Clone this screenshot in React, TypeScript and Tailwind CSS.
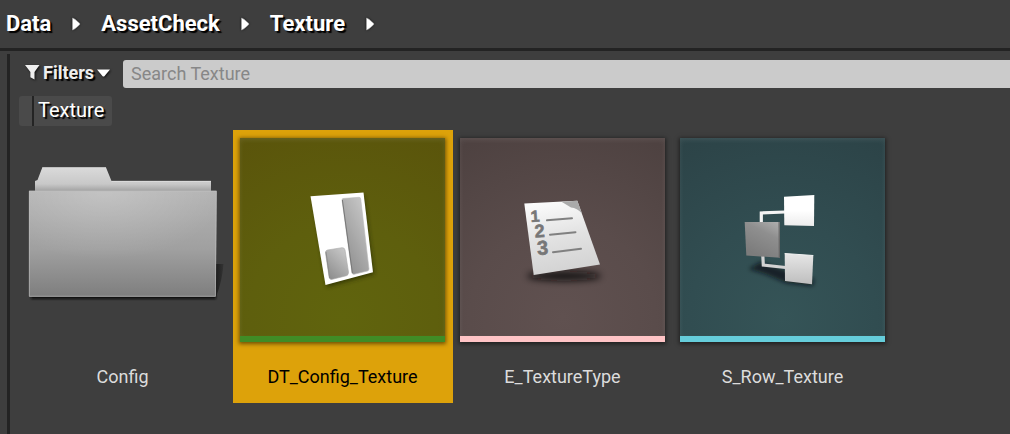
import type { ReactNode } from "react";

const crumbs = ["Data", "AssetCheck", "Texture"];

function CrumbArrow() {
  return (
    <svg viewBox="0 0 14 18" className="h-[18px] w-[14px] drop-shadow-[0_0_1px_#111]" aria-hidden="true">
      <path d="M3.500 3 V15 Q5.500 14.600 10.600 9.700 Q11.200 9 10.600 8.300 Q5.500 3.400 3.500 3Z" fill="#fff" stroke="#aaa" strokeWidth=".6" />
    </svg>
  );
}

function FolderArt() {
  return (
    <svg viewBox="0 0 205 204" className="h-[204px] w-[205px]" aria-hidden="true">
      <defs>
        <linearGradient id="folder-front" x1="0" y1="0" x2="0" y2="1">
          <stop offset="0" stopColor="#b3b3b3" />
          <stop offset=".55" stopColor="#a0a0a0" />
          <stop offset="1" stopColor="#7e7e7e" />
        </linearGradient>
        <radialGradient id="folder-shine" cx=".4" cy="0" r=".65">
          <stop offset="0" stopColor="#fff" stopOpacity=".22" />
          <stop offset="1" stopColor="#fff" stopOpacity="0" />
        </radialGradient>
        <linearGradient id="folder-back" x1="0" y1="0" x2="0" y2="1">
          <stop offset="0" stopColor="#dadada" />
          <stop offset=".7" stopColor="#c8c8c8" />
          <stop offset="1" stopColor="#a2a2a2" />
        </linearGradient>
        <linearGradient id="folder-side" x1="0" y1="0" x2="1" y2="0">
          <stop offset="0" stopColor="#1c1c1c" />
          <stop offset="1" stopColor="#333" />
        </linearGradient>
        <filter id="folder-blur" x="-10%" y="-100%" width="120%" height="300%">
          <feGaussianBlur stdDeviation="1" />
        </filter>
      </defs>
      <path d="M195 126 H203.500 Q202 144 196 159Z" fill="url(#folder-side)" />
      <rect x="11" y="157" width="185" height="4" fill="#111" filter="url(#folder-blur)" />
      <path d="M15 53 V43 L17.500 42 L22.300 29.500 H86 L91.500 43 H191 V53Z" fill="url(#folder-back)" />
      <path d="M22.300 29.700 H86 M91.500 43.300 H191" stroke="#e6e6e6" strokeWidth=".7" />
      <path d="M9 52.700 H196.700 L195.700 158.700 H9Z" fill="url(#folder-front)" />
      <path d="M9.300 53.200 H196.300 L195.400 158.300 H9.300Z" fill="url(#folder-shine)" stroke="#c2c2c2" strokeWidth=".8" strokeOpacity=".75" />
    </svg>
  );
}

function TableArt() {
  return (
    <svg viewBox="0 0 205 198" className="block w-full" aria-hidden="true">
      <defs>
        <linearGradient id="table-bar" x1="1" y1="0" x2=".3" y2="1">
          <stop offset="0" stopColor="#cfcfcf" />
          <stop offset="1" stopColor="#8f8f8f" />
        </linearGradient>
        <filter id="table-blur" x="-30%" y="-30%" width="160%" height="160%">
          <feGaussianBlur stdDeviation="2" />
        </filter>
      </defs>
      <path d="M74 64 L124 58 L134 136 L87 149Z" fill="#222500" opacity=".7" filter="url(#table-blur)" />
      <path d="M70.500 58.300 L123.500 54.500 L133 134.300 L85.500 147Z" fill="#fff" />
      <path d="M103 60.500 L119 59.300 Q120.500 59.200 120.700 61 L129 131 Q129 132.500 127.500 133 L114 136.300 Q112.300 136.500 112 135 L102 62 Q102 60.700 103 60.500Z" fill="url(#table-bar)" stroke="#bbb" strokeWidth=".6" />
      <path d="M102.400 62 L112.400 135" stroke="#777" strokeWidth="1" />
      <path d="M87.500 112 L102 109.700 Q104.600 109.500 105 112 L108.500 134 Q108.700 137 106.500 137.700 L91.500 141.500 Q89.500 141.500 89.200 139.500 L85.500 115 Q85.200 112.500 87.500 112Z" fill="url(#table-bar)" stroke="#aaa" strokeWidth=".6" />
      <path d="M86 114 L89.600 140" stroke="#858585" strokeWidth=".8" />
    </svg>
  );
}

function EnumArt() {
  return (
    <svg viewBox="0 0 205 198" className="block w-full" aria-hidden="true">
      <defs>
        <linearGradient id="enum-page" x1=".3" y1="0" x2=".5" y2="1">
          <stop offset="0" stopColor="#fcfcfc" />
          <stop offset=".5" stopColor="#e2e2e2" />
          <stop offset="1" stopColor="#d2d2d2" />
        </linearGradient>
        <filter id="enum-blur" x="-30%" y="-100%" width="160%" height="300%">
          <feGaussianBlur stdDeviation="3.500" />
        </filter>
      </defs>
      <ellipse cx="104" cy="138" rx="37" ry="5" fill="#0d0909" opacity=".85" filter="url(#enum-blur)" />
      <path d="M64.300 65.500 L117.300 62.800 L140 126.500 L73.700 137Z" fill="url(#enum-page)" />
      <path d="M101.500 63.700 L117.300 62.800 L122 75.500 Q117 70 111 69.500Z" fill="#aaa" />
      <g fill="none" stroke="#808080" strokeWidth="2" strokeLinecap="round">
        <path d="M87 82.300 L112 80.300" />
        <path d="M90 96.700 L115.500 94.200" />
        <path d="M93 114.200 L121 110.800" />
      </g>
      <g className="font-['Liberation_Sans',sans-serif] font-bold" fill="#777" stroke="#777" strokeWidth=".6">
        <text x="71" y="84" fontSize="16" transform="rotate(-4 71 84)">1</text>
        <text x="75" y="99.500" fontSize="18" transform="rotate(-4 75 99)">2</text>
        <text x="77.500" y="117" fontSize="20" transform="rotate(-4 78 117)">3</text>
      </g>
    </svg>
  );
}

function StructArt() {
  return (
    <svg viewBox="0 0 205 198" className="block w-full" aria-hidden="true">
      <defs>
        <linearGradient id="struct-root" x1="1" y1="0" x2=".5" y2="1">
          <stop offset="0" stopColor="#b0b0b0" />
          <stop offset=".4" stopColor="#8f8f8f" />
          <stop offset="1" stopColor="#7c7c7c" />
        </linearGradient>
        <linearGradient id="struct-leaf" x1="0" y1="0" x2="0" y2="1">
          <stop offset="0" stopColor="#e6e6e6" />
          <stop offset="1" stopColor="#bebebe" />
        </linearGradient>
        <linearGradient id="struct-top" x1="0" y1="0" x2="0" y2="1">
          <stop offset=".5" stopColor="#fff" />
          <stop offset="1" stopColor="#ececec" />
        </linearGradient>
        <filter id="struct-blur" x="-40%" y="-60%" width="180%" height="220%">
          <feGaussianBlur stdDeviation="2" />
        </filter>
      </defs>
      <path d="M69 131 L80 124 L104 132 L134 141 L133 148 L106 145 L85 136Z" fill="#071013" opacity=".7" filter="url(#struct-blur)" />
      <path d="M81.300 86 V75 L105 74" fill="none" stroke="#f4f4f4" strokeWidth="3.200" />
      <path d="M82.800 117 L83.300 127 L105.500 129.500" fill="none" stroke="#d2d2d2" strokeWidth="3.200" />
      <path d="M104 58.700 L134.300 57 L134 88 L104.300 87.300Z" fill="url(#struct-top)" />
      <path d="M64.700 84 H99.700 L100 119.700 L66.300 117.500Z" fill="url(#struct-root)" />
      <path d="M98.500 84 H99.700 L100 119.700 L98.700 119.500Z" fill="#666" />
      <path d="M104.700 115.500 L133.300 117.500 L132 146.300 L105 143Z" fill="url(#struct-leaf)" />
      <path d="M104.700 115.500 L133.300 117.500" stroke="#f2f2f2" strokeWidth="1" />
    </svg>
  );
}

interface TileProps {
  name: string;
  art: ReactNode;
  selected?: boolean;
  thumb?: string;
  bar?: string;
}

function Tile({ name, art, selected, thumb, bar }: TileProps) {
  return (
    <button
      type="button"
      aria-pressed={!!selected}
      className={`flex w-[220px] shrink-0 flex-col items-center pt-2 pr-2 pb-3 pl-[7px] ${selected ? "bg-[#dda20a] text-black" : "text-[#dcdcdc]"}`}
    >
      {thumb ? (
        <span className={`block w-[205px] shadow-[0_1px_4px_1px_rgba(0,0,0,0.5)] ${thumb}`}>
          <span className="block shadow-[inset_0_2px_5px_rgba(255,255,255,0.09)]">{art}</span>
          <span className={`block h-[6px] ${bar}`} />
        </span>
      ) : (
        art
      )}
      <span className="mt-[21px] text-lg leading-7">{name}</span>
    </button>
  );
}

export default function App() {
  return (
    <div className="flex min-h-screen flex-col overflow-hidden bg-[#3e3e3e] font-[Roboto,sans-serif] text-white">
      <nav aria-label="Path" className="flex h-[51px] items-center border-b-[3px] border-[#232323] px-[6px]">
        {crumbs.map((crumb) => (
          <span key={crumb} className="flex items-center">
            <a href="#" className="text-[22px] leading-7 font-bold [text-shadow:2px_2px_1px_#000]">
              {crumb}
            </a>
            <span className="flex w-[50px] justify-center">
              <CrumbArrow />
            </span>
          </span>
        ))}
      </nav>

      <main className="mt-[3px] ml-[7px] flex grow flex-col border-l-[3px] border-[#232323] pt-[6px]">
        <div className="flex items-center pl-[15px]">
          <button type="button" className="flex w-[98px] items-center pb-[3px] text-[#eee]">
            <svg viewBox="0 0 16 18" className="mr-[2px] h-[18px] w-4 drop-shadow-[1px_1px_1px_#111]" aria-hidden="true">
              <path d="M0 1 H14.500 L9.500 8 V15.500 L5.400 13.300 V8Z" fill="currentColor" />
            </svg>
            <span className="text-lg leading-6 font-bold [text-shadow:2px_2px_1px_#000]">Filters</span>
            <svg viewBox="0 0 14 10" className="ml-[3px] h-[10px] w-[14px] drop-shadow-[1px_1px_1px_#111]" aria-hidden="true">
              <path d="M0 1.500 H13 L7.600 8 Q6.500 9.200 5.400 8Z" fill="#fff" />
            </svg>
          </button>
          <input
            type="text"
            aria-label="Search Texture"
            placeholder="Search Texture"
            className="h-7 min-w-0 grow rounded-l-[3px] bg-[#cbcbcb] px-2 text-lg text-[#222] outline-none placeholder:text-[#878787]"
          />
        </div>

        <div className="mt-2 ml-[9px] flex">
          <button type="button" className="flex h-[30px] items-center rounded-[3px] bg-[#4a4a4a] pr-2">
            <span className="h-full w-[15px] border-r-2 border-[#242424]" />
            <span className="pb-[2px] pl-1 text-xl leading-7 [text-shadow:2px_2px_1px_#000]">Texture</span>
          </button>
        </div>

        <div className="mt-1 ml-[3px] flex flex-wrap">
          <Tile name="Config" art={<FolderArt />} />
          <Tile
            name="DT_Config_Texture"
            selected
            thumb="bg-[radial-gradient(circle_at_50%_88%,#60640d,#5e5f0d_45%,#5a540b)]"
            bar="bg-[#408c26]"
            art={<TableArt />}
          />
          <Tile
            name="E_TextureType"
            thumb="bg-[radial-gradient(circle_at_50%_88%,#605150,#5a4c4b_45%,#4d4140)]"
            bar="bg-[#ffc4c6]"
            art={<EnumArt />}
          />
          <Tile
            name="S_Row_Texture"
            thumb="bg-[radial-gradient(circle_at_50%_88%,#355457,#314d51_45%,#2c4347)]"
            bar="bg-[#65cddb]"
            art={<StructArt />}
          />
        </div>
      </main>
    </div>
  );
}
